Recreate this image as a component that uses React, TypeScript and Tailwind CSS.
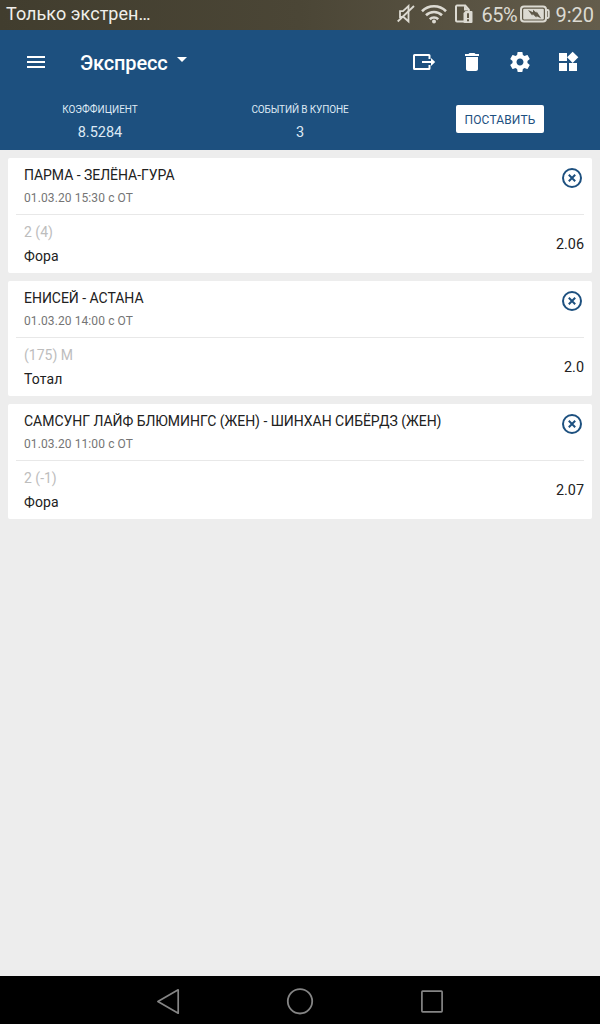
import type { ReactNode } from 'react';

interface Bet {
    title: string;
    date: string;
    pick: string;
    market: string;
    odds: string;
}

const bets: Bet[] = [
    { title: 'ПАРМА - ЗЕЛЁНА-ГУРА', date: '01.03.20 15:30 с ОТ', pick: '2 (4)', market: 'Фора', odds: '2.06' },
    { title: 'ЕНИСЕЙ - АСТАНА', date: '01.03.20 14:00 с ОТ', pick: '(175) М', market: 'Тотал', odds: '2.0' },
    {
        title: 'САМСУНГ ЛАЙФ БЛЮМИНГС (ЖЕН) - ШИНХАН СИБЁРДЗ (ЖЕН)',
        date: '01.03.20 11:00 с ОТ',
        pick: '2 (-1)',
        market: 'Фора',
        odds: '2.07',
    },
];

function Icon({ children, className = 'size-6' }: { children: ReactNode; className?: string }) {
    return (
        <svg viewBox="0 0 24 24" fill="currentColor" className={className}>
            {children}
        </svg>
    );
}

function StatusBar() {
    return (
        <div className="h-[30px] flex items-center justify-between bg-linear-to-r from-[#413d2e] via-[#4b4636] to-[#645d4c] text-[#dcdad2]">
            <span className="pl-[6px] pb-[2px] text-[18px] leading-[28px] tracking-[0.05px] text-[#f0efea]">Только экстрен…</span>
            <div className="flex items-center pr-[6px]">
                <svg viewBox="0 0 18 20" className="w-[18px] h-5 mr-[6px] mb-[3px]" fill="none" stroke="currentColor" strokeWidth="1.8">
                    <path d="M3 7.2h3L11.5 2v15.5L6.5 13H3z" />
                    <path d="M.7 17.5 17 2" />
                </svg>
                <svg viewBox="0 0 26 20" className="w-[26px] h-5 mr-[8px] mb-[2px]" fill="none" stroke="currentColor" strokeWidth="2.6">
                    <path d="M1 7.2a17.2 17.2 0 0 1 24 0M5 11.3a11.5 11.5 0 0 1 16 0M8.8 15.2a6 6 0 0 1 8.4 0" />
                    <circle cx="13" cy="17.4" r="2" fill="currentColor" stroke="none" />
                </svg>
                <svg viewBox="0 0 18 20" className="w-[18px] h-5 mr-[8px] mb-[3px]" fill="none" stroke="currentColor" strokeWidth="2">
                    <path d="M9 17.4H2a1 1 0 0 1-1-1V2.6a1 1 0 0 1 1-1h8.2l3.6 4V9" />
                    <path d="M9 1.6v4.8h5z" fill="currentColor" stroke="none" />
                    <path d="M8.5 9l2-2h6a1 1 0 0 1 1 1v10a1 1 0 0 1-1 1h-7a1 1 0 0 1-1-1z" fill="currentColor" stroke="none" />
                    <path d="M13 9.2v4.8M13 15.3v2" stroke="#615a49" strokeWidth="2" />
                </svg>
                <span className="w-[38px] text-[20px] leading-[30px] tracking-[-0.4px]">65%</span>
                <svg viewBox="0 0 31 20" className="w-[31px] h-5 mr-[5px] mb-[3px]" fill="none" stroke="currentColor" strokeWidth="2">
                    <rect x="2" y="2.6" width="25" height="15" rx="3" />
                    <rect x="4.2" y="4.8" width="20.6" height="10.6" rx="1" fill="currentColor" stroke="none" />
                    <path d="M27.5 6h1a1.2 1.2 0 0 1 1.2 1.2v5.6a1.2 1.2 0 0 1-1.2 1.2h-1" />
                    <path d="M9 6l5 2.2V5.8l3.4 3 .3-1.2 4.6 6.8-4.6-2.2-.4 1.4-3.4-3.4-.8 1.4z" fill="#5f5848" stroke="none" />
                </svg>
                <span className="text-[20px] leading-[30px]">9:20</span>
            </div>
        </div>
    );
}

function Header() {
    return (
        <header className="h-[120px] bg-[#1d507f] text-white">
            <div className="h-16 flex items-center px-5">
                <button className="ml-1">
                    <Icon>
                        <path d="M3 18h18v-2H3v2zm0-5h18v-2H3v2zm0-7v2h18V6H3z" />
                    </Icon>
                </button>
                <h1 className="ml-8 pt-[2px] text-[20px] leading-6 font-medium tracking-[-0.15px]">Экспресс</h1>
                <Icon className="size-6 ml-[2px] -mt-[6px]">
                    <path d="M7 10l5 5 5-5z" />
                </Icon>
                <div className="ml-auto flex gap-6">
                    <Icon>
                        <path d="M17.5 9V5.5q0-.5-.5-.5H2.5q-.5 0-.5.5v13q0 .5.5.5H17q.5 0 .5-.5V15" fill="none" stroke="currentColor" strokeWidth="2" />
                        <path d="M10 11h9V8l4.2 4-4.2 4v-3h-9z" />
                    </Icon>
                    <Icon>
                        <path d="M6 19c0 1.1.9 2 2 2h8c1.1 0 2-.9 2-2V7H6v12zM19 4h-3.5l-1-1h-5l-1 1H5v2h14V4z" />
                    </Icon>
                    <Icon>
                        <path d="M19.43 12.98c.04-.32.07-.64.07-.98s-.03-.66-.07-.98l2.11-1.65c.19-.15.24-.42.12-.64l-2-3.46c-.12-.22-.39-.3-.61-.22l-2.49 1c-.52-.4-1.08-.73-1.69-.98l-.38-2.65C14.46 2.18 14.25 2 14 2h-4c-.25 0-.46.18-.49.42l-.38 2.65c-.61.25-1.17.59-1.69.98l-2.49-1c-.23-.09-.49 0-.61.22l-2 3.46c-.13.22-.07.49.12.64l2.11 1.65c-.04.32-.07.65-.07.98s.03.66.07.98l-2.11 1.65c-.19.15-.24.42-.12.64l2 3.46c.12.22.39.3.61.22l2.49-1c.52.4 1.08.73 1.69.98l.38 2.65c.03.24.24.42.49.42h4c.25 0 .46-.18.49-.42l.38-2.65c.61-.25 1.17-.59 1.69-.98l2.49 1c.23.09.49 0 .61-.22l2-3.46c.12-.22.07-.49-.12-.64l-2.11-1.65zM12 15.5c-1.93 0-3.5-1.57-3.5-3.5s1.57-3.5 3.5-3.5 3.5 1.57 3.5 3.5-1.57 3.5-3.5 3.5z" />
                    </Icon>
                    <Icon>
                        <path d="M13 13v8h8v-8h-8zM3 21h8v-8H3v8zM3 3v8h8V3H3zm13.66-1.31L11 7.34 16.66 13l5.66-5.66-5.66-5.65z" />
                    </Icon>
                </div>
            </div>
            <div className="h-14 grid grid-cols-3 text-center text-[#dde9f4]">
                <div className="pt-2">
                    <div className="text-[10px] leading-4">КОЭФФИЦИЕНТ</div>
                    <div className="pt-[5px] text-[14.5px] leading-5">8.5284</div>
                </div>
                <div className="pt-2">
                    <div className="text-[10px] leading-4 tracking-[-0.12px]">СОБЫТИЙ В КУПОНЕ</div>
                    <div className="pt-[5px] text-[14.5px] leading-5">3</div>
                </div>
                <div className="pt-[11px]">
                    <button className="w-[88px] h-7 pt-[2px] rounded-[2px] bg-white text-[12px] leading-4 tracking-[0.15px] text-[#1d507f]">
                        ПОСТАВИТЬ
                    </button>
                </div>
            </div>
        </header>
    );
}

function BetCard({ bet }: { bet: Bet }) {
    return (
        <div className="h-[115px] px-2 rounded-[2px] bg-white text-[#212121]">
            <div className="h-[57px] px-2 pr-0 flex justify-between border-b border-[#e8e8e8]">
                <div className="pt-[7px]">
                    <div className="text-[14px] leading-5 tracking-[-0.03px]">{bet.title}</div>
                    <div className="pt-[5px] text-[12px] leading-4 tracking-[0.1px] text-[#757575]">{bet.date}</div>
                </div>
                <Icon className="size-6 mt-2 text-[#1d507f]">
                    <circle cx="12" cy="12" r="9" fill="none" stroke="currentColor" strokeWidth="2" />
                    <path d="M8.8 8.8l6.4 6.4M15.2 8.8l-6.4 6.4" stroke="currentColor" strokeWidth="2" />
                </Icon>
            </div>
            <div className="pl-2 flex justify-between text-[14px] leading-5">
                <div className="pt-[7px]">
                    <div className="text-[#bdbdbd]">{bet.pick}</div>
                    <div className="pt-1 tracking-[0.1px]">{bet.market}</div>
                </div>
                <div className="pt-5 text-[14.4px]">{bet.odds}</div>
            </div>
        </div>
    );
}

function NavigationBar() {
    return (
        <div className="h-12 flex justify-center items-center gap-[104px] pt-[2px] bg-black text-[#858585]">
            <svg viewBox="0 0 28 28" className="size-7" fill="none" stroke="currentColor" strokeWidth="1.7" strokeLinejoin="round">
                <path d="M3.9 14.5 24.2 2.8v23.4z" />
            </svg>
            <svg viewBox="0 0 28 28" className="size-7" fill="none" stroke="currentColor" strokeWidth="1.8">
                <circle cx="14" cy="14.3" r="12.2" />
            </svg>
            <svg viewBox="0 0 28 28" className="size-7" fill="none" stroke="currentColor" strokeWidth="1.7">
                <rect x="3.9" y="4.1" width="20.2" height="20.8" rx=".8" />
            </svg>
        </div>
    );
}

export default function App() {
    return (
        <div className="h-[1024px] flex flex-col overflow-hidden bg-[#ededed] font-['Roboto','Noto_Sans',sans-serif]">
            <StatusBar />
            <Header />
            <main className="flex-1 p-2 flex flex-col gap-2">
                {bets.map((bet) => (
                    <BetCard key={bet.title} bet={bet} />
                ))}
            </main>
            <NavigationBar />
        </div>
    );
}
